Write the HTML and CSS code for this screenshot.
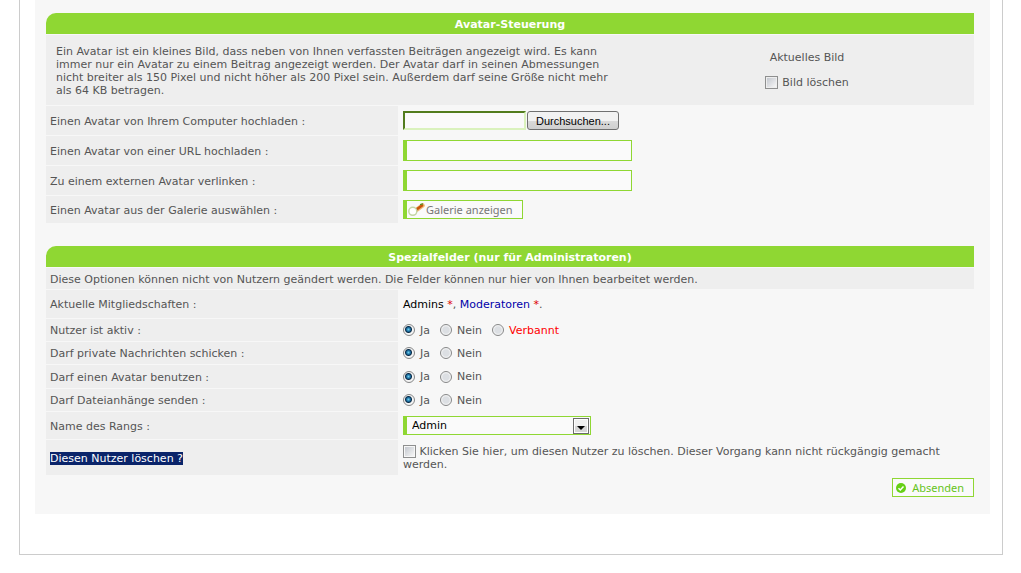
FILE: index.html
```html
<!DOCTYPE html>
<html lang="de">
<head>
<meta charset="utf-8">
<meta name="viewport" content="width=device-width, initial-scale=1">
<title>Profil bearbeiten</title>
<link rel="stylesheet" href="styles.css">
</head>
<body>
<main class="page">
<form class="panel">
  <section class="block">
    <h2 class="block-title">Avatar-Steuerung</h2>
    <div class="intro">
      <p class="intro-text">Ein Avatar ist ein kleines Bild, dass neben von Ihnen verfassten Beiträgen angezeigt wird. Es kann immer nur ein Avatar zu einem Beitrag angezeigt werden. Der Avatar darf in seinen Abmessungen nicht breiter als 150 Pixel und nicht höher als 200 Pixel sein. Außerdem darf seine Größe nicht mehr als 64 KB betragen.</p>
      <div class="current">
        <span>Aktuelles Bild</span>
        <label class="option"><input class="check" type="checkbox">Bild löschen</label>
      </div>
    </div>
    <div class="row row-field">
      <label class="name" for="upload">Einen Avatar von Ihrem Computer hochladen :</label>
      <div class="value upload"><input class="file-name" id="upload" type="text"><button class="browse" type="button">Durchsuchen...</button></div>
    </div>
    <div class="row row-field">
      <label class="name" for="url">Einen Avatar von einer URL hochladen :</label>
      <div class="value"><input class="field" id="url" type="text"></div>
    </div>
    <div class="row row-field">
      <label class="name" for="link">Zu einem externen Avatar verlinken :</label>
      <div class="value"><input class="field" id="link" type="text"></div>
    </div>
    <div class="row row-select">
      <label class="name" for="gallery">Einen Avatar aus der Galerie auswählen :</label>
      <div class="value"><button class="gallery" id="gallery" type="button"><svg width="17" height="14" viewBox="0 0 17 14" aria-hidden="true"><path d="M9 6.500 14.500 2.500" stroke="#f0b878" stroke-width="4.500" stroke-linecap="round"/><path d="M8.500 6.500 14 2.500" stroke="#c8540c" stroke-width="2.600" stroke-linecap="round"/><path d="M12 1.500 15 .8" stroke="#4a8a20" stroke-width="1.200"/><circle cx="4.800" cy="8.300" r="4" fill="#fff" stroke="#c3d5a4" stroke-width="1.500"/></svg>Galerie anzeigen</button></div>
    </div>
  </section>

  <section class="block">
    <h2 class="block-title">Spezialfelder (nur für Administratoren)</h2>
    <p class="note">Diese Optionen können nicht von Nutzern geändert werden. Die Felder können nur hier von Ihnen bearbeitet werden.</p>
    <div class="row row-groups">
      <span class="name">Aktuelle Mitgliedschaften :</span>
      <div class="value"><span><a class="admins" href="#">Admins</a> <span class="star">*</span>, <a class="mods" href="#">Moderatoren</a> <span class="star">*</span>.</span></div>
    </div>
    <div class="row" role="radiogroup" aria-labelledby="n-active">
      <span class="name" id="n-active">Nutzer ist aktiv :</span>
      <div class="value choices">
        <label class="option"><input class="radio" type="radio" name="active" checked>Ja</label>
        <label class="option"><input class="radio" type="radio" name="active">Nein</label>
        <label class="option banned"><input class="radio" type="radio" name="active">Verbannt</label>
      </div>
    </div>
    <div class="row" role="radiogroup" aria-labelledby="n-pm">
      <span class="name" id="n-pm">Darf private Nachrichten schicken :</span>
      <div class="value choices">
        <label class="option"><input class="radio" type="radio" name="pm" checked>Ja</label>
        <label class="option"><input class="radio" type="radio" name="pm">Nein</label>
      </div>
    </div>
    <div class="row row-tall" role="radiogroup" aria-labelledby="n-avatar">
      <span class="name" id="n-avatar">Darf einen Avatar benutzen :</span>
      <div class="value choices">
        <label class="option"><input class="radio" type="radio" name="avatar" checked>Ja</label>
        <label class="option"><input class="radio" type="radio" name="avatar">Nein</label>
      </div>
    </div>
    <div class="row" role="radiogroup" aria-labelledby="n-files">
      <span class="name" id="n-files">Darf Dateianhänge senden :</span>
      <div class="value choices">
        <label class="option"><input class="radio" type="radio" name="files" checked>Ja</label>
        <label class="option"><input class="radio" type="radio" name="files">Nein</label>
      </div>
    </div>
    <div class="row row-select">
      <label class="name" for="rank">Name des Rangs :</label>
      <div class="value"><span class="select"><select class="rank" id="rank"><option>Admin</option></select><svg class="arrow" width="16" height="16" viewBox="0 0 16 16" aria-hidden="true"><rect x=".5" y=".5" width="15" height="15" fill="#fff" stroke="#6c6c6c"/><rect x="2" y="2" width="12" height="6" fill="#f0f0f0"/><rect x="2" y="8" width="12" height="6" fill="#d6d6d6"/><path d="M4 8h8l-4 4z" fill="#000"/></svg></span></div>
    </div>
    <div class="row row-delete">
      <label class="name" for="remove"><span class="marked">Diesen Nutzer löschen ?</span></label>
      <div class="value"><div class="delete-text"><input class="check" id="remove" type="checkbox"><label for="remove"> Klicken Sie hier, um diesen Nutzer zu löschen. Dieser Vorgang kann nicht rückgängig gemacht werden.</label></div></div>
    </div>
  </section>
  <div class="actions">
    <button class="submit" type="submit"><svg width="10" height="10" viewBox="0 0 10 10" aria-hidden="true"><circle cx="5" cy="5" r="5" fill="#66d016"/><path d="M2.500 5.300 4.300 7 7.500 3.500" fill="none" stroke="#fff" stroke-width="1.500"/></svg>Absenden</button>
  </div>
</form>
</main>
</body>
</html>
```
FILE: styles.css
```css
* {
  box-sizing: border-box;
}

body {
  margin: 0;
  background: #fff;
  color: #555;
  font: 11px/13px "DejaVu Sans", Verdana, sans-serif;
}

button,
input,
select {
  margin: 0;
  font: inherit;
}

.page {
  margin: 0 18px 0 19px;
  padding: 0 12px 40px 15px;
  border: 1px solid #ccc;
  border-top: 0;
}

.panel {
  padding: 13px 16px 17px 11px;
  background: #f7f7f7;
}

.block {
  display: grid;
  gap: 1px;
}

.block + .block {
  margin-top: 23px;
}

.block-title {
  margin: 0;
  padding: 5px 4px 3px;
  border-radius: 10px 0 0 0;
  background: #8fd733;
  color: #fff;
  font-size: 11px;
  line-height: 13px;
  font-weight: bold;
  text-align: center;
}

.intro {
  display: grid;
  grid-template-columns: 594px 1fr;
  min-height: 70px;
  align-items: center;
  background: #eee;
}

.intro-text {
  margin: 0;
  padding: 2px 16px 0 10px;
}

.current {
  display: grid;
  justify-items: center;
  gap: 12px;
}

.note {
  margin: 0;
  padding: 5px 4px 3px;
  background: #eee;
}

.row {
  display: grid;
  grid-template-columns: 352px 1fr;
  column-gap: 5px;
  min-height: 22px;
}

.row-tall {
  min-height: 23px;
}

.row-field {
  min-height: 29px;
}

.row-groups {
  min-height: 28px;
}

.row-select {
  min-height: 27px;
}

.row-delete {
  min-height: 35px;
}

.name {
  display: flex;
  align-items: center;
  padding: 1px 4px 0;
  background: #eee;
}

.value {
  display: flex;
  align-items: center;
}

.option {
  display: flex;
  align-items: center;
  gap: 4px;
}

.choices {
  gap: 10px;
}

.choices .option {
  gap: 5px;
}

.banned {
  color: #f00;
}

.check {
  appearance: none;
  width: 13px;
  height: 13px;
  border: 1px solid #8e8f8f;
  background: linear-gradient(135deg, #c4c8cf, #f6f6f6) content-box #f4f4f4;
  padding: 1px;
}

.radio {
  appearance: none;
  width: 12px;
  height: 12px;
  border: 1px solid #868788;
  border-radius: 50%;
  background: radial-gradient(circle, #dcdfe3 3px, #f7f7f7 5px);
}

.radio:checked {
  background: radial-gradient(circle at 45% 45%, #6fd0f0 0, #1a6a9c 2px, #0b2c48 3px, #f4f4f4 4px);
}

.upload {
  gap: 1px;
}

.file-name {
  width: 123px;
  height: 19px;
  border: 2px solid;
  border-color: #527c1d #daf2bd #daf2bd #527c1d;
  background: #fafafa;
}

.browse {
  height: 19px;
  padding: 0 8px;
  border: 1px solid #707070;
  border-radius: 3px;
  background: linear-gradient(#f2f2f2 50%, #dadada 50%, #cfcfcf);
  color: #000;
  font: 11px/16px "Liberation Sans", Arial, sans-serif;
}

.field {
  width: 229px;
  height: 21px;
  border: 1px solid #8fd733;
  border-left-width: 4px;
  background: #fafafa;
}

.gallery {
  display: flex;
  align-items: center;
  gap: 1px;
  height: 19px;
  padding: 0 9px 0 1px;
  border: 1px solid #8fd733;
  border-left-width: 4px;
  background: #fafafa;
  color: #777;
  font: 11px/17px "Noto Sans", sans-serif;
}

.admins {
  color: #000;
  text-decoration: none;
}

.mods {
  color: #00a;
  text-decoration: none;
}

.star {
  color: #d00;
}

.select {
  display: grid;
  position: relative;
}

.rank {
  appearance: none;
  width: 188px;
  height: 19px;
  padding: 0 20px 0 5px;
  border: 1px solid #8fd733;
  border-left-width: 4px;
  border-radius: 0;
  background: #fafafa;
  color: #000;
}

.arrow {
  position: absolute;
  top: 2px;
  right: 2px;
  pointer-events: none;
}

.marked {
  background: #0a246a;
  color: #fff;
}

.delete-text .check {
  vertical-align: -3px;
}

.actions {
  display: flex;
  justify-content: flex-end;
  margin-top: 3px;
}

.submit {
  display: flex;
  align-items: center;
  gap: 6px;
  height: 19px;
  padding: 0 9px 0 3px;
  border: 1px solid #8fd733;
  background: #fafafa;
  color: #66c41c;
  font: 11px/17px "Noto Sans", sans-serif;
}
```
